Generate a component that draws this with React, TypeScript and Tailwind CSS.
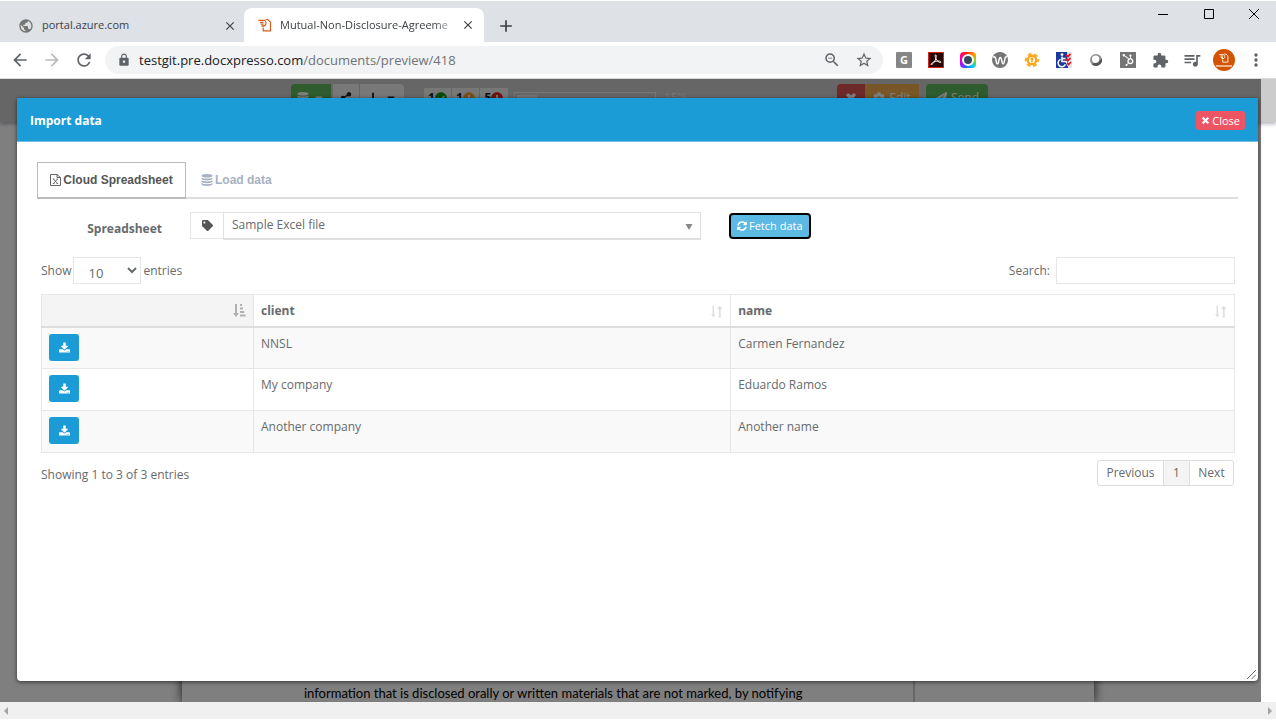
import type {ReactNode} from 'react'
import {FaCog, FaPaperPlane, FaShareAlt, FaSyncAlt, FaTag, FaTimes, FaLongArrowAltDown, FaCaretDown, FaCheckCircle, FaExclamationCircle, FaHubspot} from 'react-icons/fa'
import {MdAdd, MdArrowBack, MdArrowForward, MdClose, MdExtension, MdLock, MdMoreVert, MdPublic, MdQueueMusic, MdRefresh, MdStarBorder, MdZoomOut} from 'react-icons/md'

const rows = [
  {client: 'NNSL', name: 'Carmen Fernandez'},
  {client: 'My company', name: 'Eduardo Ramos'},
  {client: 'Another company', name: 'Another name'},
]

const DocxpressoLogo = ({className}: {className: string}) => (
  <svg viewBox="0 0 14 14" className={className} fill="none" stroke="currentColor" aria-hidden="true">
    <path d="M5.200 9.500v3.300h7.300V4.200L9.800 1.500H7.500" strokeWidth="1.200" />
    <path d="M.3 2.300h6.200M2 4.300h3.500M2.600 6.200h3M3.400 8h3" strokeWidth="1.300" />
    <path d="M6 2.300c1.400.2 2 1 2 2.500S7.500 7.700 6 8" strokeWidth="1.100" />
  </svg>
)

const DatabaseIcon = () => (
  <svg viewBox="0 0 12 12" className="size-3" fill="currentColor" aria-hidden="true">
    <ellipse cx="6" cy="1.800" rx="5.500" ry="1.800" />
    <path d="M.5 3.400c1 .8 3 1.200 5.500 1.200s4.500-.4 5.500-1.200v1.300c0 1-2.500 1.700-5.500 1.700S.5 5.700.5 4.700zM.5 6.200C1.500 7 3.500 7.400 6 7.400s4.500-.4 5.500-1.200v1.300c0 1-2.500 1.700-5.500 1.700S.5 8.500.5 7.500zM.5 9C1.500 9.800 3.500 10.200 6 10.200s4.500-.4 5.500-1.200v1.300c0 1-2.500 1.700-5.500 1.700S.5 11.300.5 10.300z" />
  </svg>
)

const SpreadsheetIcon = () => (
  <svg viewBox="0 0 11 12" className="h-3 w-[11px]" fill="none" stroke="currentColor" aria-hidden="true">
    <path d="M.5.5H7l3.500 3v8H.5zM7 .5v3h3.500" strokeWidth="0.900" />
    <path d="m3.500 5 4 4.500M7.500 5l-4 4.500M2.900 5h1.600M6.500 5h1.600M2.900 9.500h1.600M6.500 9.500h1.600" strokeWidth="0.800" />
  </svg>
)

const DownloadIcon = () => (
  <svg viewBox="0 0 1664 1536" className="size-[11px]" fill="currentColor" aria-hidden="true">
    <path d="M1280 1344q0-26-19-45t-45-19-45 19-19 45 19 45 45 19 45-19 19-45zm256 0q0-26-19-45t-45-19-45 19-19 45 19 45 45 19 45-19 19-45zm128-224v320q0 40-28 68t-68 28H96q-40 0-68-28t-28-68v-320q0-40 28-68t68-28h465l135 136q58 56 136 56t136-56l136-136h464q40 0 68 28t28 68zm-325-569q17 41-14 70l-448 448q-18 19-45 19t-45-19L339 621q-31-29-14-70 17-39 59-39h256V64q0-26 19-45t45-19h256q26 0 45 19t19 45v448h256q42 0 59 39z" />
  </svg>
)

const AcrobatIcon = () => (
  <svg viewBox="0 0 16 16" className="size-4">
    <rect x="0.5" y="0.5" width="15" height="15" fill="#2a0505" stroke="#d9230f" />
    <path d="M7.500 2.800c1.300 0 .8 3-.2 5.200S4.200 13 3.200 12.600C2.200 12 5.500 9.600 8 9.200s5-.2 5 .9-2.400.3-4-1.600S6.500 2.800 7.500 2.800z" fill="none" stroke="#eee" />
  </svg>
)

const ColorPickerIcon = () => (
  <span className="flex size-4 items-center justify-center rounded bg-[conic-gradient(from_45deg,#ff9a00,#7ddc1f,#00c8ff,#2f5bff,#c400ff,#ff0080,#ff2a00,#ff9a00)]">
    <span className="size-3 rounded-full border-2 border-white bg-[#34495e]" />
  </span>
)

const WaveIcon = () => (
  <svg viewBox="0 0 16 16" className="size-4">
    <circle cx="8" cy="8" r="8" fill="#757575" />
    <path d="M1 5.500c1.500-1.500 2.400-.5 2.800 1.500l.7 3.500c.4 1.800 1.400 1.800 1.900 0l1-4c.4-1.400 1.400-1.400 1.800 0l1 4c.4 1.800 1.400 1.800 1.900 0l1-4.500c.3-1 1-1.500 2-1" fill="none" stroke="#fff" strokeWidth="1.400" />
  </svg>
)

const GearIcon = () => (
  <svg viewBox="0 0 16 16" className="size-4">
    <circle cx="8" cy="8" r="5.700" fill="none" stroke="#fcb131" strokeWidth="3" strokeDasharray="3.600 2.370" strokeDashoffset="1.800" />
    <circle cx="8" cy="8" r="4.200" fill="#fff" stroke="#f9a61a" strokeWidth="2.200" />
    <path d="M8 4.800 5.800 7.600h1.400v3h1.600v-3h1.400z" fill="#f9a61a" />
  </svg>
)

const WheelchairIcon = () => (
  <svg viewBox="0 0 16 16" className="size-4">
    <rect width="16" height="16" fill="#1c3a9c" />
    <path d="M11 0h5v16h-4z" fill="#dfe4f5" />
    <circle cx="6" cy="2.600" r="1.400" fill="#fff" />
    <path d="M6 4.500v5h4l2 4M6 6.500h3.500M4.600 7.400a3.800 3.800 0 1 0 4.800 5" fill="none" stroke="#fff" strokeWidth="1.500" />
    <path d="m10 3 2 1.500L14.500 2M10 7l2 1.500L14.500 6M11 11l1.600 1.500L15 10" fill="none" stroke="#e02020" strokeWidth="1.800" />
  </svg>
)

const LensIcon = () => (
  <svg viewBox="0 0 16 16" className="size-4">
    <circle cx="8" cy="8" r="6" fill="#8d8d8d" />
    <path d="M3.800 12.200A6 6 0 0 0 13.800 6.500L12 8z" fill="#555" />
    <circle cx="7.600" cy="7.200" r="3.700" fill="#fff" />
  </svg>
)

const extensions: {label: string, icon: ReactNode}[] = [
  {label: 'Grammar', icon: <span className="flex size-4 items-center justify-center rounded-[1px] bg-[#868686] text-[11px] leading-4 font-bold text-white">G</span>},
  {label: 'PDF', icon: <AcrobatIcon />},
  {label: 'Color picker', icon: <ColorPickerIcon />},
  {label: 'Wave', icon: <WaveIcon />},
  {label: 'Uploader', icon: <GearIcon />},
  {label: 'Accessibility', icon: <WheelchairIcon />},
  {label: 'Lens', icon: <LensIcon />},
  {label: 'Hubspot', icon: <span className="flex size-4 items-center justify-center bg-[#757575] text-white"><FaHubspot className="size-3" /></span>},
  {label: 'Extensions', icon: <MdExtension className="size-[17px]" />},
  {label: 'Media', icon: <MdQueueMusic className="size-5" />},
]

const BrowserChrome = () => (
  <header className="shrink-0 border-b border-[#d9d9d9] bg-white pt-px font-['Open_Sans','Noto_Sans',sans-serif] text-[#3c4043]">
    <div className="flex h-[41px] bg-[#dee1e6] text-[11px]">
      <div className="flex items-end">
        <div className="flex h-[33px] w-[244px] items-center pr-[7px] pl-[18px]">
          <MdPublic className="size-4 shrink-0 text-[#757575]" />
          <span className="ml-2 flex-1">portal.azure.com</span>
          <button type="button" aria-label="Close portal.azure.com"><MdClose className="size-3.5" stroke="currentColor" /></button>
        </div>
        <div className="flex h-[34px] w-[240px] items-center rounded-t-lg bg-white pr-[9px] pl-3.5">
          <DocxpressoLogo className="size-3.5 shrink-0 text-[#d95b1e]" />
          <span className="ml-2 flex-1 mask-r-from-85% whitespace-nowrap">Mutual-Non-Disclosure-Agreeme</span>
          <button type="button" aria-label="Close Mutual-Non-Disclosure-Agreement"><MdClose className="size-3.5" stroke="currentColor" /></button>
        </div>
        <button type="button" aria-label="New tab" className="ml-3 flex h-[33px] items-center"><MdAdd className="size-5" stroke="currentColor" /></button>
      </div>
      <div className="ml-auto flex h-[26px] items-center text-black">
        <button type="button" aria-label="Minimize" className="flex h-full w-[46px] items-center justify-center">
          <svg viewBox="0 0 10 10" className="size-2.5"><path d="M0 5.500h10" stroke="currentColor" /></svg>
        </button>
        <button type="button" aria-label="Maximize" className="flex h-full w-[46px] items-center justify-center">
          <svg viewBox="0 0 10 10" className="size-2.5"><path d="M.5.5h9v9h-9z" fill="none" stroke="currentColor" /></svg>
        </button>
        <button type="button" aria-label="Close window" className="flex h-full w-11 items-center justify-center">
          <svg viewBox="0 0 10 10" className="size-2.5"><path d="m0 0 10 10M10 0 0 10" stroke="currentColor" /></svg>
        </button>
      </div>
    </div>

    <div className="flex h-9 items-center pr-1 pl-1 text-[#5f6368]">
      <button type="button" aria-label="Back" className="flex w-8 justify-center"><MdArrowBack className="size-5" /></button>
      <button type="button" aria-label="Forward" className="flex w-8 justify-center text-[#bababa]"><MdArrowForward className="size-5" /></button>
      <button type="button" aria-label="Reload" className="flex w-8 justify-center"><MdRefresh className="size-5" /></button>
      <div className="mx-[5px] flex h-7 flex-1 items-center rounded-full bg-[#f1f3f4] pr-2.5 pl-3">
        <MdLock className="size-3.5" />
        <span className="ml-2 flex-1 text-[13px] leading-5 text-[#6f7377]"><span className="text-[#202124]">testgit.pre.docxpresso.com</span>/documents/preview/418</span>
        <button type="button" aria-label="Zoom out"><MdZoomOut className="size-[18px]" /></button>
        <button type="button" aria-label="Bookmark" className="ml-3.5"><MdStarBorder className="size-[18px]" /></button>
      </div>
      {extensions.map(({label, icon}) => (
        <button type="button" aria-label={label} key={label} className="flex w-8 justify-center">{icon}</button>
      ))}
      <button type="button" aria-label="Profile" className="flex w-8 justify-center">
        <span className="flex size-[22px] flex-col items-center justify-center rounded-full bg-[#d35400] text-white">
          <DocxpressoLogo className="size-2.5" />
          <span className="mt-0.5 h-0.5 w-4 bg-[#f0b48a]" />
        </span>
      </button>
      <button type="button" aria-label="Menu" className="flex w-8 justify-center"><MdMoreVert className="size-5" /></button>
    </div>
  </header>
)

// the document preview that stays dimmed below the dialog
const DocumentPreview = () => (
  <div className="flex h-full flex-col bg-white">
    <div className="relative flex h-[43px] shrink-0 items-start justify-center bg-[#ccc] pt-[5px] pl-[3px] text-xs shadow-[0_2px_4px_rgba(60,60,90,0.4)]">
      <div className="flex w-[697px] items-start">
        <button type="button" aria-label="Data" className="flex h-7 w-10 items-center justify-center gap-1 rounded-l bg-[#5cb85c] text-white"><DatabaseIcon /><FaCaretDown /></button>
        <button type="button" aria-label="Share" className="ml-0.5 flex h-7 w-[26px] items-center justify-center bg-[#f0f0f0] text-[#222]"><FaShareAlt /></button>
        <button type="button" aria-label="Download" className="ml-px flex h-7 w-11 items-center justify-center gap-1.5 rounded-r bg-[#f0f0f0] text-[#222]"><FaLongArrowAltDown /><FaCaretDown /></button>
        <div className="mt-1 ml-5 flex gap-px font-bold text-[#222]">
          <span className="flex h-5 w-[27px] items-center justify-center bg-[#eee]">1<FaCheckCircle className="text-[#119911]" /></span>
          <span className="flex h-5 w-[27px] items-center justify-center bg-[#eee]">1<FaExclamationCircle className="text-[#f0a030]" /></span>
          <span className="flex h-5 w-[28px] items-center justify-center bg-[#eee]">5<FaExclamationCircle className="text-[#e02020]" /></span>
        </div>
        <div className="mt-2 ml-1.5 h-4 w-[142px] border border-white/60 p-0.5"><div className="h-full w-5 bg-white/60" /></div>
        <span className="mt-1.5 ml-2 text-white/60">15%</span>
        <div className="ml-auto flex text-white">
          <button type="button" aria-label="Delete" className="flex h-7 w-7 items-center justify-center rounded-l bg-[#d9534f]"><FaTimes stroke="currentColor" strokeWidth={50} /></button>
          <button type="button" className="flex h-7 w-[54px] items-center justify-center gap-1 bg-[#f0ad4e]"><FaCog />Edit</button>
          <button type="button" className="ml-[7px] flex h-7 w-[62px] items-center justify-center gap-1 rounded bg-[#5cb85c]"><FaPaperPlane />Send</button>
        </div>
      </div>
    </div>
    <div className="mr-[182px] ml-[182px] flex flex-1 flex-col justify-end shadow-[0_0_10px_rgba(0,0,0,0.8)]">
      <div className="mr-[179px] flex-1 border-r-2 border-[#ccc]" />
      <p className="mr-[179px] border-r-2 border-[#ccc] pl-[122px] font-[Lato,sans-serif] text-[13px] leading-[18px] whitespace-nowrap text-black">
        information that is disclosed orally or written materials that are not marked, by notifying
      </p>
    </div>
  </div>
)

const SortIcon = ({sorted}: {sorted?: boolean}) => (
  <svg viewBox="0 0 12 13" className={sorted ? 'size-[13px] text-[#b0b0b0]' : 'size-[13px] text-[#e0e0e0]'} fill="currentColor" aria-hidden="true">
    {sorted
      ? <path d="M1.500 0h2v9h2l-3 4-3-4h2zM6.500 0h2v2h-2zM6.500 3.500h3v2h-3zM6.500 7h4.200v2H6.500zM6.500 10.500H12v2H6.500z" />
      : <path d="M2 1h1.500v8H5l-2.200 3.500L.5 9H2zM8.200 12.500h2V4H12L9.200.5 6.500 4h1.700z" />}
  </svg>
)

const DataTable = () => (
  <table className="mt-2.5 w-full table-fixed border-collapse border border-[#e7e7e7]">
    <thead>
      <tr className="h-8 border-b-2 border-[#ddd] text-left">
        <th className="w-[212px] bg-[#f4f4f4] px-[7px]" aria-label="Import"><span className="flex justify-end"><SortIcon sorted /></span></th>
        <th className="w-[40%] border-l border-[#e7e7e7] px-[7px] pt-0.5"><span className="flex items-center justify-between">client<SortIcon /></span></th>
        <th className="border-l border-[#e7e7e7] px-[7px] pt-0.5"><span className="flex items-center justify-between">name<SortIcon /></span></th>
      </tr>
    </thead>
    <tbody>
      {rows.map(({client, name}) => (
        <tr className="h-[42px] border-t border-[#e7e7e7] align-top odd:bg-[#f9f9f9]" key={client}>
          <td className="px-[7px] pt-1.5">
            <button type="button" aria-label={`Import ${client}`} className="flex h-[27px] w-[30px] items-center justify-center rounded-[3px] bg-[#1c9cd7] text-white"><DownloadIcon /></button>
          </td>
          <td className="border-l border-[#e7e7e7] px-[7px] pt-[7px]">{client}</td>
          <td className="border-l border-[#e7e7e7] px-[7px] pt-[7px]">{name}</td>
        </tr>
      ))}
    </tbody>
  </table>
)

const ImportDialog = () => (
  <section role="dialog" aria-labelledby="import-title" className="absolute top-[19px] right-[18px] bottom-[21px] left-[17px] flex flex-col overflow-hidden rounded-b bg-white text-[12px] leading-[18px] text-[#676a6c] shadow-[0_1px_4px_rgba(0,0,0,0.6)]">
    <div className="flex h-11 shrink-0 items-center justify-between border-b border-[#6dbfe6] bg-[#1c9cd7] px-[13px] pt-0.5 text-white">
      <h1 id="import-title" className="font-bold">Import data</h1>
      <button type="button" className="flex h-[19px] items-center gap-0.5 rounded-[3px] bg-[#ed5565] px-[5px] text-[11px] font-medium"><FaTimes className="size-[9px]" stroke="currentColor" strokeWidth={50} />Close</button>
    </div>

    <div className="px-5 pt-5">
      <div role="tablist" className="flex border-b-2 border-[#ddd] font-['Liberation_Sans',Arial,sans-serif] font-bold">
        <button role="tab" type="button" aria-selected="true" className="-mb-0.5 flex h-[37px] w-[149px] items-center justify-center gap-0.5 border border-b-2 border-[#bbb] text-[#555]"><SpreadsheetIcon />Cloud Spreadsheet</button>
        <button role="tab" type="button" aria-selected="false" className="flex h-[35px] items-center gap-0.5 px-[15px] text-[#a7b1c2]"><DatabaseIcon />Load data</button>
      </div>

      <div className="mt-[13px] flex items-start">
        <label htmlFor="spreadsheet" className="mt-2 w-[125px] text-right font-bold">Spreadsheet</label>
        <div className="ml-7 flex h-[27px] w-[511px]">
          <span className="flex w-[34px] shrink-0 items-center justify-center border border-[#e5e6e7]"><FaTag className="size-[11px] text-[#555]" /></span>
          <div className="relative -ml-px flex-1">
            <select id="spreadsheet" className="h-7 w-full appearance-none border border-b-2 border-[#e0e0e0] bg-white px-2 pb-0.5 leading-5">
              <option>Sample Excel file</option>
            </select>
            <svg viewBox="0 0 8 6" className="pointer-events-none absolute top-3 right-2 h-1.5 w-2" fill="#888"><path d="M.5 0h7L4 6z" /></svg>
          </div>
        </div>
        <button type="button" className="mt-px ml-7 flex h-[26px] items-center gap-0.5 rounded border-2 border-black bg-[#5bb9e3] px-1.5 text-[11px] font-medium text-white"><FaSyncAlt className="size-2.5" />Fetch data</button>
      </div>
    </div>

    <div className="pt-[18px] pr-[23px] pl-6">
      <div className="flex items-center justify-between">
        <label className="flex items-center gap-0.5">
          Show
          <select className="h-[27px] w-[68px] border border-[#e5e6e7] bg-white pt-1 pl-2.5 text-[13px]">
            <option>10</option>
          </select>
          entries
        </label>
        <label className="flex items-center gap-1.5">
          Search:
          <input type="search" className="h-[27px] w-[179px] border border-[#e5e6e7] bg-white px-2" />
        </label>
      </div>

      <DataTable />

      <div className="flex items-start justify-between pt-[7px]">
        <p className="mt-1.5">Showing 1 to 3 of 3 entries</p>
        <nav aria-label="Pages" className="mr-px flex h-[26px] divide-x divide-[#ddd] rounded-[3px] border border-[#ddd]">
          <button type="button" className="w-[66px]">Previous</button>
          <button type="button" aria-current="page" className="w-[26px] bg-[#f4f4f4]">1</button>
          <button type="button" className="w-[43px]">Next</button>
        </nav>
      </div>
    </div>

    <svg viewBox="0 0 9 9" className="absolute right-0.5 bottom-0.5 size-[9px]" stroke="#666" fill="none"><path d="M0 9 9 0M4.500 9 9 4.500" /></svg>
  </section>
)

export default function App() {
  return (
    <div className="flex h-screen flex-col overflow-hidden bg-white pb-px font-['Open_Sans','Noto_Sans',sans-serif]">
      <BrowserChrome />
      <main className="relative min-h-0 flex-1 overflow-hidden">
        <DocumentPreview />
        <div className="absolute inset-y-0 right-[15px] left-0 bg-black/50" />
        <ImportDialog />
      </main>
      <div className="flex h-[17px] shrink-0 items-center justify-between bg-[#f0f0f0] px-1 text-[#a3a3a3]">
        <svg viewBox="0 0 4 8" className="h-2 w-1" fill="currentColor"><path d="M4 0v8L0 4z" /></svg>
        <svg viewBox="0 0 4 8" className="h-2 w-1" fill="currentColor"><path d="M0 0v8l4-4z" /></svg>
      </div>
    </div>
  )
}
